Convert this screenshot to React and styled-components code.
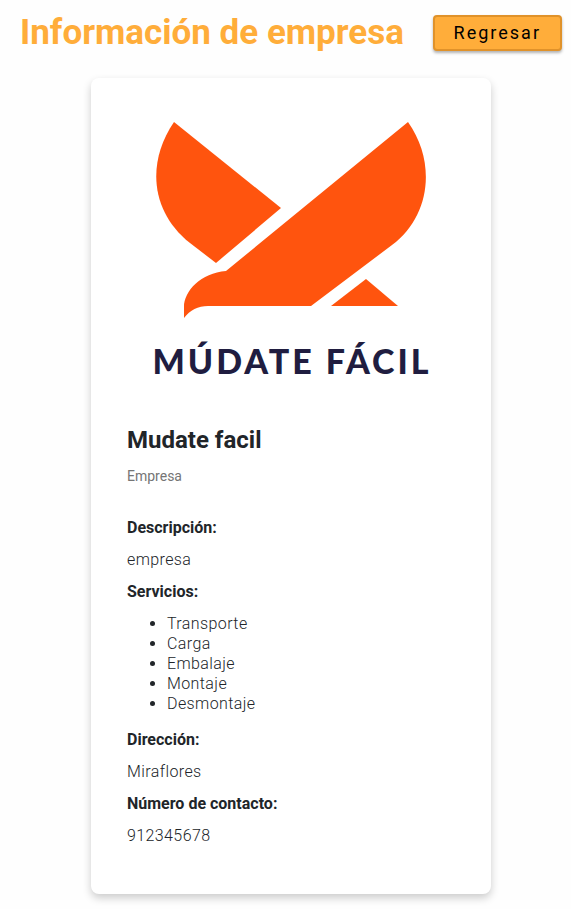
import React from "react";
import styled, { createGlobalStyle } from "styled-components";

const GlobalStyle = createGlobalStyle`
  *, *::before, *::after { box-sizing: border-box; }
  body {
    margin: 0;
    background: #fefefe;
    color: #212529;
    font-family: Roboto, "Liberation Sans", sans-serif;
    font-size: 16px;
    line-height: 20px;
  }
`;

const Page = styled.div`
  padding: 8px 9px 14px 20px;
`;

const Header = styled.header`
  display: flex;
  align-items: center;
  justify-content: space-between;
  gap: 16px;
  margin-bottom: 20px;
`;

const Title = styled.h1`
  margin: 0;
  color: #ffad3a;
  font-size: 35px;
  font-weight: 700;
  line-height: 50px;
`;

const BackButton = styled.button`
  flex: none;
  height: 36px;
  padding: 0 19px;
  border: 2px solid #e0922a;
  border-radius: 4px;
  background: #ffad3a;
  box-shadow: 0 2px 3px rgba(0, 0, 0, 0.3);
  color: #000;
  font: 400 18px/24px Roboto, sans-serif;
  letter-spacing: 2px;
  cursor: pointer;
`;

const Card = styled.main`
  max-width: 400px;
  margin: 0 auto;
  padding: 36px;
  border-radius: 8px;
  background: #fff;
  box-shadow: 0 4px 8px rgba(0, 0, 0, 0.2);
`;

const Logo = styled.svg`
  display: block;
  width: 100%;
  height: auto;
`;

const Wordmark = styled.text`
  fill: #201d40;
  font-family: Lato, sans-serif;
  font-size: 34px;
  font-weight: 900;
  letter-spacing: 3px;
`;

const CompanyName = styled.h2`
  margin: 0 0 10px;
  font-size: 24px;
  font-weight: 700;
  line-height: 32px;
`;

const CompanyType = styled.p`
  margin: 0 0 32px;
  color: #757575;
  font-size: 14px;
  line-height: 20px;
`;

const Details = styled.dl`
  margin: 0;
`;

const Term = styled.dt`
  margin-bottom: 12px;
  font-weight: 700;
`;

const Value = styled.dd`
  margin: 0 0 12px;
  font-weight: 300;
  letter-spacing: 0.025em;
`;

const Services = styled.ul`
  margin: 0 0 16px;
  padding-left: 40px;
`;

const services = ["Transporte", "Carga", "Embalaje", "Montaje", "Desmontaje"];

export default function App() {
  return (
    <>
      <GlobalStyle />
      <Page>
        <Header>
          <Title>Información de empresa</Title>
          <BackButton type="button">Regresar</BackButton>
        </Header>
        <Card>
          <Logo viewBox="0 0 328 310" role="img" aria-label="Múdate Fácil">
            <g fill="#ff540e">
              <path d="M47 8 L154 94 L89 149 L63 129 C24 98 19 49 47 8Z" />
              <path d="M281 8 L99 157 C74 159 57 177 57 193 L57 204 C63 196 71 192 81 192 L184 192 L265 131 C303 103 310 49 281 8Z" />
              <path d="M239 165 L271 192 L204 192Z" />
            </g>
            <Wordmark x="165" y="260" textAnchor="middle">MÚDATE FÁCIL</Wordmark>
          </Logo>
          <CompanyName>Mudate facil</CompanyName>
          <CompanyType>Empresa</CompanyType>
          <Details>
            <Term>Descripción:</Term>
            <Value>empresa</Value>
            <Term>Servicios:</Term>
            <Value>
              <Services>
                {services.map((service) => (
                  <li key={service}>{service}</li>
                ))}
              </Services>
            </Value>
            <Term>Dirección:</Term>
            <Value>Miraflores</Value>
            <Term>Número de contacto:</Term>
            <Value>912345678</Value>
          </Details>
        </Card>
      </Page>
    </>
  );
}
